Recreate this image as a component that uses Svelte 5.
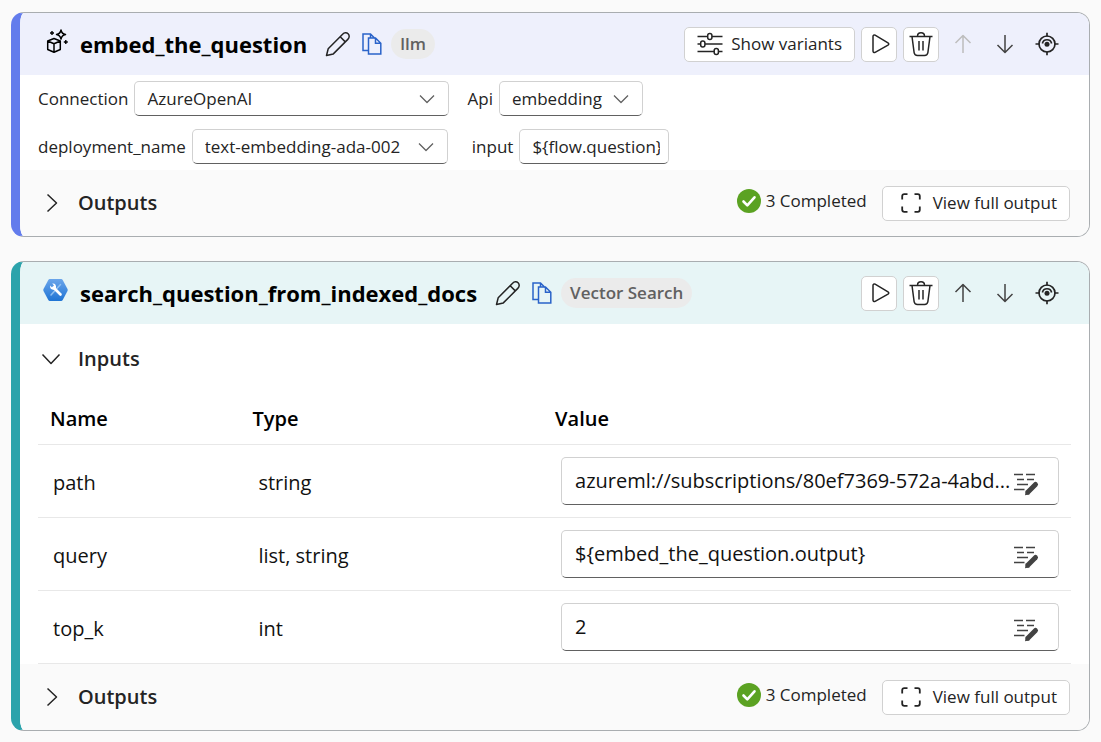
<script>
  let showInputs = $state(true);
  let openOutputs = $state({ embed: false, search: false });

  let connection = $state('AzureOpenAI');
  let api = $state('embedding');
  let deployment = $state('text-embedding-ada-002');
  let question = $state('${flow.question}');

  let rows = $state([
    { name: 'path', type: 'string', value: 'azureml://subscriptions/80ef7369-572a-4abd...' },
    { name: 'query', type: 'list, string', value: '${embed_the_question.output}' },
    { name: 'top_k', type: 'int', value: '2' }
  ]);
</script>

{#snippet chevron()}
  <svg class="chevron" width="16" height="10" viewBox="0 0 16 10" aria-hidden="true">
    <path d="M1 1.5 8 8.5 15 1.5" />
  </svg>
{/snippet}

{#snippet titleTools(name)}
  <button class="bare pencil" aria-label="Rename {name}">
    <svg width="26" height="26" viewBox="0 0 26 26" aria-hidden="true">
      <path d="M1.5 24.5 3.2 17.8 17.6 3.2C19.3 1.5 21.6 1.3 23.1 2.8S24.6 6.600 22.800 8.400L8.300 22.900Z M15.200 5.800 20.300 10.900" />
    </svg>
  </button>
  <button class="bare copy" aria-label="Copy {name}">
    <svg width="20" height="22" viewBox="0 0 20 22" aria-hidden="true">
      <path d="M6.500 17.500H1V1H8.500L13 5.500M8.500 1V5M6.500 5H13.500L18.800 10.200V21H6.500Z M13.500 5V10.200H18.800" />
    </svg>
  </button>
{/snippet}

{#snippet nodeTools(name, first)}
  <button class="boxed square play" aria-label="Run {name}">
    <svg width="20" height="20" viewBox="0 0 20 20" aria-hidden="true">
      <path d="M3 2.500C3 1.300 4.100.700 5.100 1.200L18 8.800C19 9.400 19 10.600 18 11.200L5.100 18.300C4.100 18.800 3 18.200 3 17Z" />
    </svg>
  </button>
  <button class="boxed square" aria-label="Delete {name}">
    <svg width="24" height="26" viewBox="0 0 24 26" aria-hidden="true">
      <path d="M.500 5.500H23.500M8.500 5.200C8.500 .700 15.500 .700 15.500 5.200M3 5.500 5.100 21.500C5.400 23.700 6.500 24.500 8.500 24.500H15.500C17.500 24.500 18.600 23.700 18.900 21.500L21 5.500M10 10V19.500M14 10V19.500" />
    </svg>
  </button>
  <button class="bare square" aria-label="Move {name} up" disabled={first}>
    <svg width="18" height="20" viewBox="0 0 18 20" aria-hidden="true">
      <path d="M9 19V1.500M1.500 9 9 1.500 16.500 9" />
    </svg>
  </button>
  <button class="bare square" aria-label="Move {name} down">
    <svg width="18" height="20" viewBox="0 0 18 20" aria-hidden="true">
      <path d="M9 1V18.500M1.500 11 9 18.500 16.500 11" />
    </svg>
  </button>
  <button class="bare square target" aria-label="Locate {name}">
    <svg width="24" height="24" viewBox="0 0 24 24" aria-hidden="true">
      <circle cx="12" cy="12" r="8" />
      <path d="M12 .800V4.500M12 19.500V23.200M.500 12H4.500M19.500 12H23.500M7.400 11.500A4.700 4.700 0 0 1 16.600 11.500" />
      <circle class="dot" cx="12" cy="12.300" r="2.500" />
    </svg>
  </button>
{/snippet}

{#snippet outputs(key)}
  <footer>
    <button
      class="toggle"
      aria-expanded={openOutputs[key]}
      onclick={() => (openOutputs[key] = !openOutputs[key])}
    >
      <svg class:open={openOutputs[key]} width="20" height="20" viewBox="0 0 20 20" aria-hidden="true">
        <path d="M5.500 1.500 14.500 10 5.500 18.500" />
      </svg>
      <span>Outputs</span>
    </button>
    <div class="status">
      <svg width="24" height="24" viewBox="0 0 24 24" aria-hidden="true">
        <circle cx="12" cy="12" r="12" />
        <path d="M6.500 12.500 10.300 16.300 17.500 8.300" />
      </svg>
      <span>3 Completed</span>
    </div>
    <button class="boxed view">
      <svg width="20" height="20" viewBox="0 0 20 20" aria-hidden="true">
        <path d="M1.200 6.500V3.200C1.200 2 2 1.200 3.200 1.200H6.500M13.500 1.200H16.800C18 1.200 18.800 2 18.800 3.200V6.500M18.800 13.500V16.800C18.800 18 18 18.800 16.800 18.800H13.500M6.500 18.800H3.200C2 18.800 1.200 18 1.200 16.800V13.500" />
      </svg>
      <span>View full output</span>
    </button>
  </footer>
{/snippet}

<main>
  <section class="card llm">
    <header>
      <svg class="kind" width="24" height="26" viewBox="0 0 24 26" aria-hidden="true">
        <path d="M8 9.500 14.300 12V20.500L8 23.300 1.700 20.500V12ZM1.700 12 8 14.800 14.300 12M8 14.800V23.300" />
        <path d="M15 1C15.600 4 16.600 5 19.500 5.500 16.600 6 15.600 7 15 10 14.400 7 13.400 6 10.500 5.500 13.400 5 14.400 4 15 1Z" />
        <path class="spark" d="M6 2V6M4 4H8M19.800 11V15M17.800 13H21.800" />
      </svg>
      <h2>embed_the_question</h2>
      {@render titleTools('embed_the_question')}
      <span class="tag">llm</span>
      <div class="actions">
        <button class="boxed variants">
          <svg width="26" height="24" viewBox="0 0 26 24" aria-hidden="true">
            <path d="M.500 4.500H10.500M15 4.500H25.500M.500 12H3.500M8 12H25.500M.500 19.500H17M21.500 19.500H25.500" />
            <rect x="10.700" y="1.500" width="4.200" height="6" rx="2" />
            <rect x="3.700" y="9" width="4.200" height="6" rx="2" />
            <rect x="17.200" y="16.500" width="4.200" height="6" rx="2" />
          </svg>
          <span>Show variants</span>
        </button>
        {@render nodeTools('embed_the_question', true)}
      </div>
    </header>

    <div class="params">
      <div class="line">
        <label for="connection">Connection</label>
        <div class="select wide">
          <select id="connection" bind:value={connection}><option>AzureOpenAI</option></select>
          {@render chevron()}
        </div>
        <label class="next" for="api">Api</label>
        <div class="select narrow">
          <select id="api" bind:value={api}><option>embedding</option></select>
          {@render chevron()}
        </div>
      </div>
      <div class="line">
        <label for="deployment">deployment_name</label>
        <div class="select medium">
          <select id="deployment" bind:value={deployment}><option>text-embedding-ada-002</option></select>
          {@render chevron()}
        </div>
        <label class="far" for="question">input</label>
        <input id="question" class="field" type="text" bind:value={question} />
      </div>
    </div>
    {@render outputs('embed')}
  </section>

  <section class="card tool">
    <header>
      <svg class="kind hex" width="24" height="26" viewBox="0 0 24 26" aria-hidden="true">
        <defs>
          <linearGradient id="hexFill" x1="0" y1="0" x2="0" y2="1">
            <stop offset="0" stop-color="#6aa5ea" />
            <stop offset="1" stop-color="#1f74d4" />
          </linearGradient>
        </defs>
        <path fill="url(#hexFill)" d="M5.800 2H17.200Q18.200 2 18.700 2.900L23.500 12Q24 13 23.500 14L18.700 23.100Q18.200 24 17.200 24H5.800Q4.800 24 4.300 23.100L-.500 14Q-1 13-.500 12L4.300 2.900Q4.800 2 5.800 2Z" />
        <path stroke="#8fc0f2" stroke-width="1.500" stroke-linecap="round" d="M16.500 7.500 7 18" />
        <path stroke="#fff" stroke-width="2.600" stroke-linecap="round" d="M9.500 10.500 16.500 17.500" />
        <path fill="#fff" d="M8.200 6.600 9.800 8.300 9.500 9.900 7.800 10.200 6.200 8.600C5.500 11.400 7.600 13.300 10.200 12.500L12 10.800C12.600 8.200 10.800 6 8.200 6.600Z" />
      </svg>
      <h2>search_question_from_indexed_docs</h2>
      {@render titleTools('search_question_from_indexed_docs')}
      <span class="tag">Vector Search</span>
      <div class="actions">
        {@render nodeTools('search_question_from_indexed_docs', false)}
      </div>
    </header>

    <div class="inputs">
      <button class="toggle" aria-expanded={showInputs} onclick={() => (showInputs = !showInputs)}>
        <svg class:open={showInputs} width="20" height="20" viewBox="0 0 20 20" aria-hidden="true">
          <path d="M5.500 1.500 14.500 10 5.500 18.500" />
        </svg>
        <span>Inputs</span>
      </button>
      {#if showInputs}
        <table>
          <thead>
            <tr><th class="name">Name</th><th class="type">Type</th><th>Value</th></tr>
          </thead>
          <tbody>
            {#each rows as row (row.name)}
              <tr>
                <td class="text first">{row.name}</td>
                <td class="text">{row.type}</td>
                <td>
                  <div class="value">
                    <input type="text" aria-label="{row.name} value" bind:value={row.value} />
                    <button class="bare edit" aria-label="Edit {row.name}">
                      <svg width="26" height="24" viewBox="0 0 26 24" aria-hidden="true">
                        <path d="M1 2.500H10M13 2.500H22M4 7.500H11M14 7.500H21M4 12.500H15M1 17.500H11.500" />
                        <path class="pen" d="M15 20 22.500 12.500" />
                        <path class="nib" d="M12.800 18.300 16.800 22.300 12 23.300Z" />
                      </svg>
                    </button>
                  </div>
                </td>
              </tr>
            {/each}
          </tbody>
        </table>
      {/if}
    </div>
    {@render outputs('search')}
  </section>
</main>

<style>
  :global(body) {
    margin: 0;
    background: #fafafa;
  }

  main {
    display: flex;
    flex-direction: column;
    gap: 24px;
    padding: 12px 11px 11px;
    font-family: 'Open Sans', 'Noto Sans', sans-serif;
    font-size: 17px;
    line-height: 24px;
    color: #242424;
  }

  main * {
    box-sizing: border-box;
  }

  svg {
    display: block;
    flex: none;
    overflow: visible;
    fill: none;
    stroke: #242424;
    stroke-width: 1.5;
    stroke-linejoin: round;
  }

  button,
  input,
  select {
    font: inherit;
    color: inherit;
    margin: 0;
  }

  button {
    display: flex;
    align-items: center;
    padding: 0;
    white-space: nowrap;
    cursor: pointer;
  }

  .card {
    border: 1px solid #a9adb0;
    border-left: 9px solid #637cec;
    border-radius: 13px;
    background: #fff;
    overflow: hidden;
  }

  .card.tool {
    border-left-color: #2ca3ab;
  }

  header {
    display: flex;
    align-items: center;
    height: 62px;
    padding: 0 24px 0 26px;
    background: #eef0fc;
  }

  .tool header {
    background: #e7f5f6;
  }

  .kind {
    margin: 0 10px 4px 0;
    stroke: #000;
  }

  .kind .spark {
    stroke-width: 1.4;
  }

  .kind.hex {
    margin: 0 12px 6px -2px;
    stroke: none;
  }

  h2 {
    margin: 0;
    font-size: 22px;
    line-height: 30px;
    font-weight: 700;
    color: #000;
  }

  .bare {
    justify-content: center;
    border: 0;
    background: none;
  }

  .pencil {
    margin-left: 18px;
  }

  .copy {
    margin: 0 9px 0 11px;
  }

  .copy svg {
    stroke: #2a63c9;
    stroke-linejoin: miter;
  }

  .tag {
    padding: 3px 9px;
    border-radius: 15px;
    background: #ebebeb;
    color: #616161;
    font-weight: 600;
  }

  .actions {
    display: flex;
    gap: 6px;
    margin-left: auto;
  }

  .boxed {
    height: 35px;
    border: 1px solid #d1d1d1;
    border-radius: 5px;
    background: #fff;
  }

  .square {
    justify-content: center;
    width: 36px;
    height: 35px;
  }

  .play {
    padding-left: 2px;
  }

  .bare.square svg {
    stroke: #424242;
  }

  .bare.square:disabled svg {
    stroke: #bdbdbd;
  }

  .bare.target svg {
    stroke: #242424;
    stroke-width: 1.7;
  }

  .bare.target .dot {
    fill: #242424;
    stroke: none;
  }

  .variants {
    gap: 8px;
    padding: 0 12px;
  }

  .params {
    display: flex;
    flex-direction: column;
    gap: 13px;
    padding: 6px 18px;
  }

  .line {
    display: flex;
    align-items: center;
    gap: 6px;
  }

  .next {
    margin-left: 12px;
  }

  .far {
    margin-left: 18px;
  }

  .select {
    display: grid;
    align-items: center;
  }

  .select select,
  .select .chevron {
    grid-area: 1 / 1;
  }

  .select select,
  .field {
    width: 100%;
    height: 35px;
    padding: 0 12px;
    appearance: none;
    border: 1px solid #d1d1d1;
    border-bottom-color: #616161;
    border-radius: 5px;
    background: #fff;
  }

  .chevron {
    justify-self: end;
    margin-right: 14px;
    pointer-events: none;
    stroke: #616161;
    stroke-width: 1.3;
  }

  .wide {
    width: 315px;
  }

  .medium {
    width: 256px;
  }

  .narrow {
    width: 144px;
  }

  .line .field {
    width: 150px;
    padding-right: 8px;
  }

  footer {
    display: flex;
    align-items: center;
    height: 66px;
    padding: 0 19px 0 22px;
    background: #fafafa;
  }

  .toggle {
    gap: 16px;
    border: 0;
    background: none;
    font-size: 20px;
    line-height: 28px;
    font-weight: 600;
  }

  .toggle .open {
    transform: rotate(90deg);
  }

  .status {
    display: flex;
    align-items: center;
    gap: 5px;
    margin: 0 15px 4px auto;
  }

  .status svg {
    fill: #5ba222;
    stroke: none;
  }

  .status path {
    fill: none;
    stroke: #fff;
    stroke-width: 2.6;
    stroke-linecap: round;
  }

  .view {
    gap: 12px;
    padding: 0 12px 0 18px;
  }

  .view svg {
    stroke-width: 1.8;
  }

  .inputs {
    padding: 0 18px;
  }

  .inputs .toggle {
    height: 70px;
    margin-left: 3px;
    gap: 17px;
  }

  table {
    width: 100%;
    table-layout: fixed;
    border-collapse: separate;
    border-spacing: 0;
    font-size: 20px;
    line-height: 28px;
    color: #111;
  }

  th {
    height: 51px;
    padding: 0 12px;
    text-align: left;
    font-weight: 600;
    color: #000;
    border-bottom: 1px solid #e8e8e8;
  }

  .name {
    width: 19.6%;
  }

  .type {
    width: 29.3%;
  }

  td {
    height: 73px;
    padding: 0 12px 0 18px;
    border-bottom: 1px solid #e8e8e8;
  }

  td.text {
    padding-top: 3px;
  }

  td.first {
    padding-left: 15px;
  }

  .value {
    display: flex;
    align-items: center;
    height: 48px;
    padding: 0 19px 0 13px;
    border: 1px solid #d1d1d1;
    border-bottom-color: #616161;
    border-radius: 5px;
  }

  .value input {
    flex: 1;
    min-width: 0;
    padding: 0;
    border: 0;
    outline: 0;
    background: none;
    text-overflow: ellipsis;
  }

  .edit {
    margin-top: 6px;
  }

  .edit svg {
    stroke: #424242;
  }

  .edit .pen {
    stroke-width: 5;
    stroke-linecap: round;
  }

  .edit .nib {
    fill: #424242;
    stroke: none;
  }
</style>
